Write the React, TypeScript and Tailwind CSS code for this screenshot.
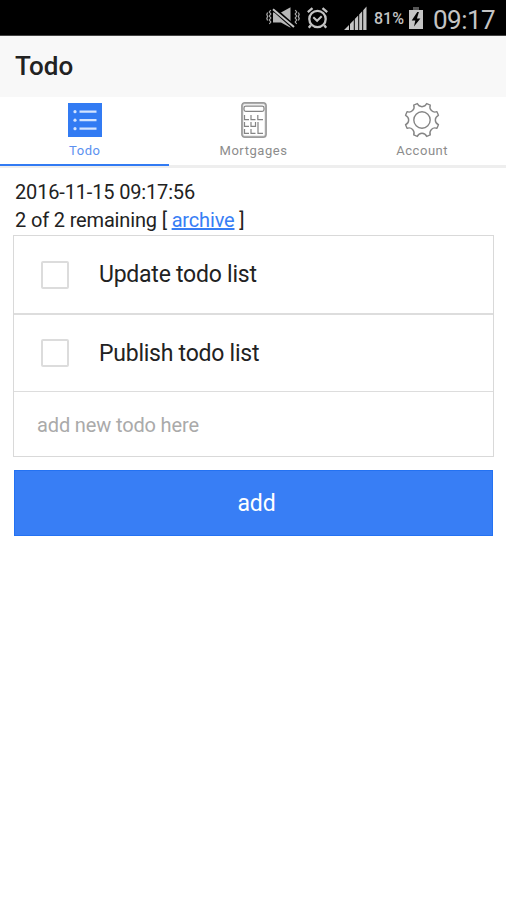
import { ReactNode, useState } from "react";

interface TabItem {
  label: string;
  icon: ReactNode;
}

interface TodoItem {
  text: string;
  done: boolean;
}

// eight rounded teeth around the origin
const gearPath = () => {
  const point = (deg: number, r: number) => {
    const a = (deg * Math.PI) / 180;
    return `${(r * Math.sin(a)).toFixed(2)} ${(-r * Math.cos(a)).toFixed(2)}`;
  };
  let d = `M${point(-16, 17.1)}`;
  for (let i = 0; i < 8; i++) {
    const a = i * 45;
    d += `C${point(a - 13, 12.6)} ${point(a + 13, 12.6)} ${point(a + 16, 17.1)}`;
    d += `L${point(a + 29, 17.1)}`;
  }
  return d + "Z";
};

const ListIcon = () => (
  <svg className="ml-px" width="34" height="34" viewBox="0 0 34 34">
    <path d="M0 0h34v34H0z" fill="#327bf3" />
    <g fill="#d3e4ff">
      <circle cx="7" cy="8.7" r="1.6" />
      <circle cx="7" cy="17.2" r="1.6" />
      <circle cx="7" cy="25.7" r="1.6" />
      <path d="M11.5 7.6h17v2.2h-17zM11.5 16.1h17v2.2h-17zM11.5 24.6h17v2.2h-17z" />
    </g>
  </svg>
);

const CalculatorIcon = () => (
  <svg className="ml-[2px]" width="26" height="36" viewBox="0 0 26 36" fill="none" stroke="#858585">
    <rect x="1.2" y="1.1" width="23.6" height="33.8" rx="2.4" strokeWidth="2.2" stroke="#b8b8b8" />
    <rect x="0.9" y="0.8" width="24.2" height="34.4" rx="2.6" strokeWidth="0.8" />
    <rect x="3" y="4.2" width="20" height="5.2" rx="1.8" strokeWidth="1.2" />
    <path
      d="M3.5 13v4.6H8M10 13v4.6h4.5M16.8 13v4.6H22M3.5 20v4.4H8M10 20v4.4h4.5V20M3.5 27v4.4H8M10 27v4.4h4.5M17 20v11.4h5"
      strokeWidth="1.2"
    />
  </svg>
);

const GearIcon = () => (
  <svg
    className="ml-px"
    width="36"
    height="36"
    viewBox="-18 -18 36 36"
    fill="none"
    stroke="#858585"
    strokeWidth="1.4"
    strokeLinejoin="round"
  >
    <path d={gearPath()} />
    <circle r="8.2" />
  </svg>
);

const StatusBar = () => (
  <div className="flex h-9 items-center border-b border-[#444] bg-black text-[#c4c4c4]">
    <svg className="ml-[266px]" width="34" height="22" viewBox="0 0 34 22" fill="none">
      <path d="M7 5.5h8l9.5-5.2v20.4L15 15.5H7z" fill="#b8b8b8" />
      <path d="M6 .5l22 19.5" stroke="#000" strokeWidth="4.5" />
      <path d="M7 2.3L28 20" stroke="#c4c4c4" strokeWidth="2" />
      <path
        d="M4.8 3L3.3 5l1.5 2-1.5 2 1.5 2-1.5 2 1.5 2-1.5 2M1.6 5.5l-.8 2 .8 2-.8 2 .8 2M29.2 3l1.5 2-1.5 2 1.5 2-1.5 2 1.5 2-1.5 2 1.5 2M32.4 5.5l.8 2-.8 2 .8 2-.8 2"
        stroke="#aaa"
        strokeWidth="1.2"
      />
    </svg>
    <svg
      className="ml-[7px]"
      width="21"
      height="22"
      viewBox="0 0 21 22"
      fill="none"
      stroke="#c4c4c4"
      strokeWidth="2.3"
    >
      <circle cx="10.5" cy="12" r="8.2" />
      <path d="M.8 5.2l4.7-4M20.2 5.2l-4.7-4M3.8 18.2l-2 2.6M17.2 18.2l2 2.6" />
      <path d="M6.3 10.2l3.8 3.6 4.6-4.6" strokeWidth="2" />
    </svg>
    <svg className="ml-4" width="23" height="24" viewBox="0 0 23 24">
      <path
        d="M0 24l5-5v5zM6 24v-6l3.8-4v10zM10.8 24V13l3.4-3.6V24zM15.2 24V8.4l3-3.2V24zM19.2 24V4.2L22.5.6V24z"
        fill="#c4c4c4"
      />
    </svg>
    <span className="ml-[7px] mt-[3px] text-[16px] font-medium leading-none">81%</span>
    <svg className="ml-[5px]" width="14" height="22" viewBox="0 0 14 22">
      <path d="M4 0h6v3H4z" fill="#555" />
      <path d="M0 3h14v19H0z" fill="#c4c4c4" />
      <path d="M8.3 5L2.7 13.4h3.6L5 19.5l6.4-8H7.9L9.9 5z" fill="#000" />
    </svg>
    <span className="ml-[10px] mt-[4px] text-[26px] leading-none tracking-[-0.5px]">09:17</span>
  </div>
);

const tabs: TabItem[] = [
  { label: "Todo", icon: <ListIcon /> },
  { label: "Mortgages", icon: <CalculatorIcon /> },
  { label: "Account", icon: <GearIcon /> },
];

const App = () => {
  const [activeTab, setActiveTab] = useState(0);
  const [newTodo, setNewTodo] = useState("");
  const [todos, setTodos] = useState<TodoItem[]>([
    { text: "Update todo list", done: false },
    { text: "Publish todo list", done: false },
  ]);

  const remaining = todos.filter((todo) => !todo.done).length;

  const handleToggle = (index: number) => {
    const newTodos = [...todos];
    newTodos[index] = { ...newTodos[index], done: !newTodos[index].done };
    setTodos(newTodos);
  };

  const handleAdd = () => {
    if (!newTodo) return;
    setTodos([...todos, { text: newTodo, done: false }]);
    setNewTodo("");
  };

  const handleArchive = () => {
    setTodos(todos.filter((todo) => !todo.done));
  };

  return (
    <div className="min-h-screen bg-white font-['Roboto',sans-serif] text-[#222222]">
      <StatusBar />
      <header className="flex h-[61px] items-center bg-[#f8f8f8] px-[15px] pb-[2px]">
        <h1 className="text-[26px] font-medium leading-none">Todo</h1>
      </header>
      <nav className="grid h-[71px] grid-cols-3 border-b-[3px] border-[#eeeeee]">
        {tabs.map((tab, index) => (
          <button
            key={tab.label}
            type="button"
            onClick={() => setActiveTab(index)}
            className={
              index === activeTab
                ? "-mb-px flex flex-col items-center border-b-2 border-[#327bf3] pt-[5px] text-[#5b91f0]"
                : "flex flex-col items-center pt-[5px] text-[#8c8c8c]"
            }
          >
            <span className="flex h-9 items-center">{tab.icon}</span>
            <span className="ml-px mt-[5px] text-[13px] leading-4 tracking-[0.55px]">
              {tab.label}
            </span>
          </button>
        ))}
      </nav>
      <main className="pl-[13px] pr-3 pt-[10px]">
        <div className="pl-[2px] text-[20px] leading-7 tracking-[-0.16px]">
          <p>2016-11-15 09:17:56</p>
          <p>
            {remaining} of {todos.length} remaining [{" "}
            <button
              type="button"
              onClick={handleArchive}
              className="tracking-[-0.16px] text-[#387ef5] underline"
            >
              archive
            </button>{" "}
            ]
          </p>
        </div>
        <div className="mt-px border border-[#d9d9d9]">
          {todos.map((todo, index) => (
            <label
              key={index}
              className="flex h-[79px] items-center border-b-2 border-[#dddddd] pl-[27px] text-[23px] tracking-[-0.24px] last-of-type:h-[77px] last-of-type:border-b"
            >
              <input
                type="checkbox"
                checked={todo.done}
                onChange={() => handleToggle(index)}
                className="size-7 appearance-none rounded-[2px] border-2 border-[#dcdcdc] checked:bg-[#387ef5]"
              />
              <span className="ml-[30px] pt-[2px]">{todo.text}</span>
            </label>
          ))}
          <input
            value={newTodo}
            onChange={(e) => setNewTodo(e.target.value)}
            placeholder="add new todo here"
            className="block h-16 w-full px-[23px] pt-[2px] text-[20px] tracking-[-0.14px] outline-none placeholder:text-[#aaaaaa]"
          />
        </div>
        <div className="px-px pt-[13px]">
          <button
            type="button"
            onClick={handleAdd}
            className="block h-[66px] w-full border border-[#2472f2] bg-[#387ef5] pl-[6px] pt-[2px] text-[23px] tracking-[-0.2px] text-white"
          >
            add
          </button>
        </div>
      </main>
    </div>
  );
};

export default App;
